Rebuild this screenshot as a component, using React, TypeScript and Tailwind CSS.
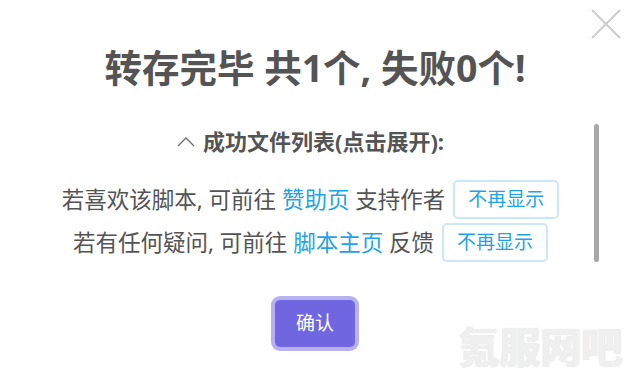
import { Fragment } from "react";

const rows = [
  { before: "若喜欢该脚本, 可前往", link: "赞助页", after: "支持作者" },
  { before: "若有任何疑问, 可前往", link: "脚本主页", after: "反馈" },
];

const App = () => {
  return (
    <Fragment>
      <div className="relative w-[630px] h-[379px] overflow-hidden bg-white text-[#545454] font-['Noto_Sans','Noto_Sans_CJK_SC',sans-serif]">
        {/* close */}
        <button className="absolute top-[8px] right-[8px] w-[32px] h-[32px] flex items-center justify-center">
          <svg width="32" height="32" viewBox="0 0 32 32">
            <path d="M2 2 L30 30 M30 2 L2 30" stroke="#cccccc" strokeWidth="2" fill="none" />
          </svg>
        </button>

        <h2 className="pt-[46px] text-center text-[37.5px] leading-[44px] font-bold text-[#545454]">
          转存完毕 共1个, 失败0个!
        </h2>

        <div className="flex mt-[28px] pl-[27px] pr-[31px]">
          <div className="flex-1 flex flex-col items-center pt-[8px]">
            <div className="flex items-center gap-[8px] h-[30px]">
              <svg width="18" height="11" viewBox="0 0 18 11">
                <polyline points="1,10 9,2 17,10" stroke="#707070" strokeWidth="1.3" fill="none" />
              </svg>
              <span className="text-[22px] font-bold leading-[30px]">成功文件列表(点击展开):</span>
            </div>

            <div className="flex flex-col items-center gap-[4px] mt-[24px]">
              {rows.map((r) => (
                <div key={r.link} className="flex items-center gap-[8px] text-[22.5px]">
                  <span>
                    {r.before} <span className="text-[#1fa3e8]">{r.link}</span> {r.after}
                  </span>
                  <button className="h-[39px] px-[13px] border-2 border-[#c9e8f9] rounded-[5px] text-[19px] text-[#1fa3e8] bg-white">
                    不再显示
                  </button>
                </div>
              ))}
            </div>
          </div>
          <div className="w-[5px] pt-[6px]">
            <div className="w-[5px] h-[138px] rounded-full bg-[#a8a8a8]" />
          </div>
        </div>

        <div className="flex justify-center mt-[38px]">
          <button className="w-[80px] h-[47px] rounded-[5px] bg-[#7066e0] text-white text-[19px] shadow-[0_0_0_4px_rgba(112,102,224,0.5)]">
            确认
          </button>
        </div>

        {/* watermark */}
        <div className="absolute right-[8px] bottom-[10px] text-[42px] leading-[44px] font-black tracking-[-1px] text-[#efefef] [text-shadow:0_0_1px_#dcdcdc]">
          氪服网吧
        </div>
      </div>
    </Fragment>
  );
};

export default App;
